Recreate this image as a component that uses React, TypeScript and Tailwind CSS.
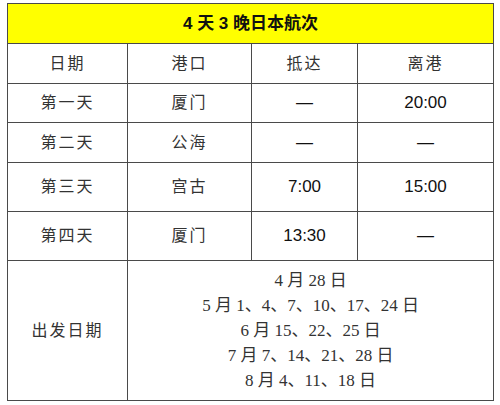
import React from "react";

const rows = [
  { day: "第一天", port: "厦门", arrive: "—", leave: "20:00", h: "h-[39px]" },
  { day: "第二天", port: "公海", arrive: "—", leave: "—", h: "h-[40px]" },
  { day: "第三天", port: "宫古", arrive: "7:00", leave: "15:00", h: "h-[49px]" },
  { day: "第四天", port: "厦门", arrive: "13:30", leave: "—", h: "h-[49px]" },
];

const dates = ["4 月 28 日", "5 月 1、4、7、10、17、24 日", "6 月 15、22、25 日", "7 月 7、14、21、28 日", "8 月 4、11、18 日"];

export default function App() {
  const cell = "border border-[#4a4a4a] text-center align-middle";
  const cjk = `${cell} text-[16px] tracking-[2px]`;
  const num = `${cell} text-[17px] text-[#111]`;
  return (
    <div className="w-[500px] h-[405px] bg-white pt-[3px] pl-[7px]" style={{ fontFamily: '"Liberation Sans", "Noto Sans CJK SC", sans-serif' }}>
      <table className="table-fixed border-collapse w-[486px] text-[#333]">
        <colgroup>
          <col className="w-[120px]" />
          <col className="w-[124px]" />
          <col className="w-[106px]" />
          <col className="w-[136px]" />
        </colgroup>
        <tbody>
          <tr className="h-[40px]">
            <td colSpan={4} className={`${cell} bg-[#ffff00] font-bold text-[17px] text-[#111]`}>4 天 3 晚日本航次</td>
          </tr>
          <tr className="h-[40px]">
            <td className={cjk}>日期</td>
            <td className={cjk}>港口</td>
            <td className={cjk}>抵达</td>
            <td className={cjk}>离港</td>
          </tr>
          {rows.map((r) => (
            <tr key={r.day} className={r.h}>
              <td className={cjk}>{r.day}</td>
              <td className={cjk}>{r.port}</td>
              <td className={num}>{r.arrive}</td>
              <td className={num}>{r.leave}</td>
            </tr>
          ))}
          <tr className="h-[140px]">
            <td className={`${cell} text-[16px] tracking-[2px]`}>出发日期</td>
            <td colSpan={3} className={`${cell} text-[17px] leading-[25px]`} style={{ fontFamily: '"Liberation Serif", "Noto Sans CJK SC", serif' }}>
              {dates.map((d) => (
                <div key={d}>{d}</div>
              ))}
            </td>
          </tr>
        </tbody>
      </table>
    </div>
  );
}
